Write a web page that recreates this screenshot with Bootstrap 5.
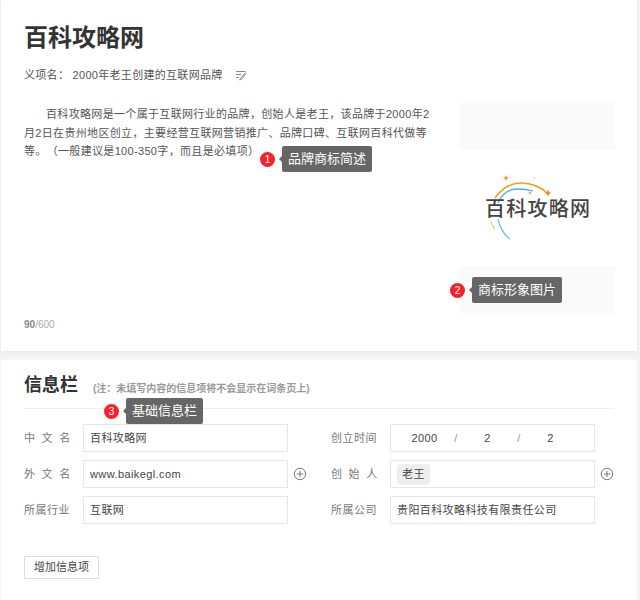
<!DOCTYPE html>
<html lang="zh">
<head>
  <meta charset="utf-8">
  <title>百科攻略网</title>
  <meta name="viewport" content="width=device-width, initial-scale=1">
  <link href="https://cdn.jsdelivr.net/npm/bootstrap@5.3.0/dist/css/bootstrap.min.css" rel="stylesheet">
  <style>
    html, body { height: 600px; overflow: hidden; }
    body {
      background: #f4f4f4;
      color: #444;
      font-family: "Liberation Sans", "Noto Sans CJK SC", sans-serif;
      font-size: 11px;
      padding: 0 3px 0 1px;
    }
    .sheet { background: #fff; position: relative; }
    .sheet-top { height: 351px; padding: 24px 22px 0 23px; box-shadow: 0 2px 6px rgba(0,0,0,.05); margin-bottom: 9px; }
    .sheet-info { height: 240px; padding: 0 0 0 23px; }
    .brand-title { font-size: 24px; font-weight: 700; line-height: 28px; color: #333; margin: 0 0 15px; }
    .alias-line { line-height: 16px; letter-spacing: .3px; color: #555; margin-bottom: 20px; }
    .edit-ico { margin-left: 9px; vertical-align: -2px; }
    .intro-row { height: 209px; }
    .intro-text { width: 410px; flex: none; line-height: 18.5px; letter-spacing: .33px; text-indent: 22px; margin: 0; color: #555; padding-top: 2px; text-spacing-trim: space-all; }
    .pic-col { width: 155px; flex: none; margin-left: 26px; }
    .pic-slot { height: 47px; background: #fafafa; }
    .logo-box { height: 116px; }
    .word-count { font-size: 10px; font-weight: 700; color: #888; margin-top: 7px; line-height: 12px; }
    .word-count span { font-weight: 400; color: #aaa; }
    .info-head { height: 49px; border-bottom: 1px solid #eee; margin-right: 23px; padding-top: 2px; }
    .info-head h2 { font-size: 18px; font-weight: 700; color: #333; margin: 0 15px 0 0; line-height: 26px; }
    .info-note { font-size: 10px; font-weight: 700; color: #999; padding-top: 6px; }
    .form-grid { padding-top: 15px; row-gap: 8px; width: 598px; }
    .field-line { height: 28px; }
    .field-label { width: 59px; color: #777; letter-spacing: .5px; flex: none; }
    .label-wide { letter-spacing: 6.6px; }
    .field-box {
      width: 205px; height: 28px; border: 1px solid #e6e6e6; padding: 0 6px;
      color: #444; letter-spacing: .4px; flex: none;
    }
    .date-box span { width: 31px; text-align: center; }
    .date-box { padding: 0 0 0 18px; }
    .date-box .slash { color: #999; width: 32px; }
    .name-tag { background: #eee; border-radius: 4px; padding: 0 5px; line-height: 21px; letter-spacing: .4px; }
    .plus-ico { margin-left: 5px; flex: none; }
    .add-btn {
      --bs-btn-font-size: 11px; --bs-btn-color: #444; --bs-btn-border-color: #ddd;
      --bs-btn-border-radius: 1px; --bs-btn-padding-x: 9px; --bs-btn-padding-y: 0;
      height: 23px; margin-top: 32px;
    }
    .tip-wrap { position: absolute; display: flex; align-items: center; z-index: 2; }
    .tip-num {
      width: 15px; height: 15px; border-radius: 50%; background: #f5222d; color: #fff;
      font-size: 10px; font-weight: 500; line-height: 15px; text-align: center; margin-right: 7px;
    }
    .tip-label {
      background: #666; color: #fff; border-radius: 2px; height: 26px; line-height: 26px;
      padding: 0 6px; font-size: 13px; position: relative;
    }
    .tip-label::before {
      content: ""; position: absolute; left: -3px; top: 10px;
      border-style: solid; border-width: 3px 3px 3px 0; border-color: transparent #666 transparent transparent;
    }
    .tip-a { left: 259px; top: 146px; }
    .tip-b { left: 449px; top: 277px; }
    .tip-c { left: 103px; top: 38px; }
  </style>
</head>
<body>
  <div class="sheet sheet-top">
    <h1 class="brand-title">百科攻略网</h1>
    <div class="alias-line">义项名： 2000年老王创建的互联网品牌
      <svg class="edit-ico" width="12" height="12" viewBox="0 0 12 12" fill="none" stroke="#888" stroke-width="1">
        <path d="M1 2.500h9.500M1 5.500h5M1 8.500h3M10.500 3.500 5.500 9.500 4.500 11l1.800-.6 5-6"/>
      </svg>
    </div>
    <div class="d-flex intro-row">
      <p class="intro-text">百科攻略网是一个属于互联网行业的品牌，创始人是老王，该品牌于2000年2月2日在贵州地区创立，主要经营互联网营销推广、品牌口碑、互联网百科代做等等。（一般建议是100-350字，而且是必填项）</p>
      <div class="pic-col">
        <div class="pic-slot"></div>
        <div class="logo-box d-flex align-items-center justify-content-center">
          <svg width="130" height="85" viewBox="0 0 130 85">
            <path d="M22 32C29 22 37 17 48 17c11 0 20 4 27 11" fill="none" stroke="#f39c12" stroke-width="1.500"/>
            <path d="M25 37c4-9 10-14 19-14 6 0 11 .5 16 2" fill="none" stroke="#45aee6" stroke-width="1.300"/>
            <path d="M25 53c2 9 6 16 12 20" fill="none" stroke="#6cc0ee" stroke-width="1.200"/>
            <path d="M18 55c.5 3 2 6 4 8" fill="none" stroke="#f5c27a" stroke-width="1.100"/>
            <path d="M33 9l1 2 2 1-2 1-1 2-1-2-2-1 2-1z" fill="#f39c3c"/>
            <path d="M75 23.500l1.100 2.400 2.400 1.100-2.400 1.100-1.100 2.400-1.100-2.400-2.400-1.100 2.400-1.100z" fill="#f08a1c"/>
            <circle cx="57" cy="27" r="1.300" fill="#f5b04c"/>
            <circle cx="61" cy="12" r=".8" fill="#8fd0f0"/>
            <text x="12" y="50" font-family="'Noto Sans CJK SC', sans-serif" font-size="20" font-weight="500" fill="#444" textLength="105">百科攻略网</text>
          </svg>
        </div>
        <div class="pic-slot"></div>
      </div>
    </div>
    <div class="word-count">90<span>/600</span></div>
    <div class="tip-wrap tip-a"><div class="tip-num">1</div><div class="tip-label">品牌商标简述</div></div>
    <div class="tip-wrap tip-b"><div class="tip-num">2</div><div class="tip-label">商标形象图片</div></div>
  </div>

  <div class="sheet sheet-info">
    <div class="info-head d-flex align-items-center">
      <h2>信息栏</h2>
      <div class="info-note">(注：未填写内容的信息项将不会显示在词条页上)</div>
    </div>
    <div class="tip-wrap tip-c"><div class="tip-num">3</div><div class="tip-label">基础信息栏</div></div>
    <div class="form-grid d-grid">
      <div class="row g-0 field-line">
        <div class="col-6 d-flex align-items-center">
          <div class="field-label label-wide">中文名</div>
          <div class="field-box d-flex align-items-center">百科攻略网</div>
        </div>
        <div class="col-6 d-flex align-items-center ps-2">
          <div class="field-label">创立时间</div>
          <div class="field-box date-box d-flex align-items-center"><span>2000</span><span class="slash">/</span><span>2</span><span class="slash">/</span><span>2</span></div>
        </div>
      </div>
      <div class="row g-0 field-line">
        <div class="col-6 d-flex align-items-center">
          <div class="field-label label-wide">外文名</div>
          <div class="field-box d-flex align-items-center">www.baikegl.com</div>
          <svg class="plus-ico" width="14" height="14" viewBox="0 0 14 14" fill="none" stroke="#777" stroke-width="1"><circle cx="7" cy="7" r="5.700"/><path d="M7 3.800v6.400M3.800 7h6.400"/></svg>
        </div>
        <div class="col-6 d-flex align-items-center ps-2">
          <div class="field-label label-wide">创始人</div>
          <div class="field-box d-flex align-items-center"><span class="name-tag">老王</span></div>
          <svg class="plus-ico" width="14" height="14" viewBox="0 0 14 14" fill="none" stroke="#777" stroke-width="1"><circle cx="7" cy="7" r="5.700"/><path d="M7 3.800v6.400M3.800 7h6.400"/></svg>
        </div>
      </div>
      <div class="row g-0 field-line">
        <div class="col-6 d-flex align-items-center">
          <div class="field-label">所属行业</div>
          <div class="field-box d-flex align-items-center">互联网</div>
        </div>
        <div class="col-6 d-flex align-items-center ps-2">
          <div class="field-label">所属公司</div>
          <div class="field-box d-flex align-items-center">贵阳百科攻略科技有限责任公司</div>
        </div>
      </div>
    </div>
    <button class="btn add-btn" type="button">增加信息项</button>
  </div>

  <script src="https://cdn.jsdelivr.net/npm/bootstrap@5.3.0/dist/js/bootstrap.bundle.min.js"></script>
</body>
</html>
